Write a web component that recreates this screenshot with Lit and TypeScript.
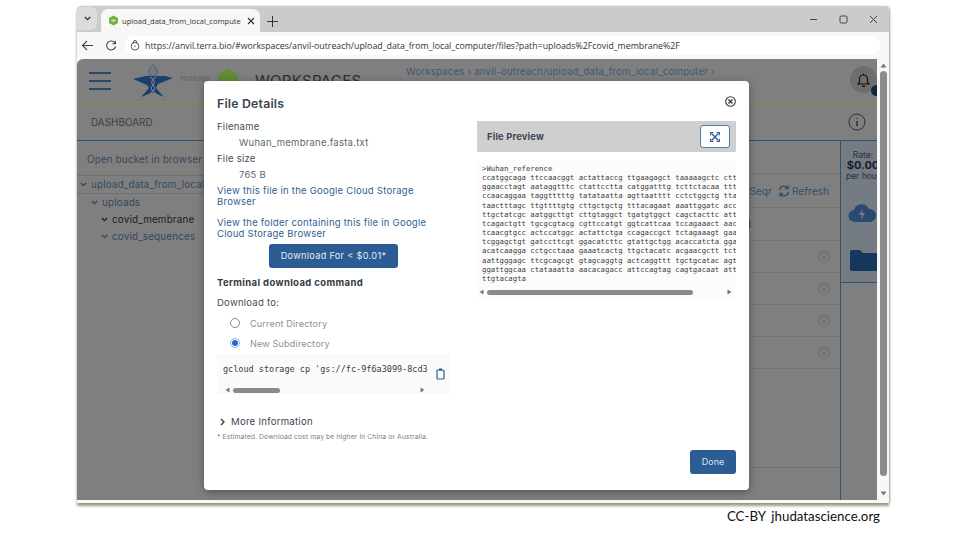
import { LitElement, html, css, svg } from "lit";
import { customElement } from "lit/decorators.js";

const FASTA = `>Wuhan_reference
ccatggcaga ttccaacggt actattaccg ttgaagagct taaaaagctc cttgaac
ggaacctagt aataggtttc ctattcctta catggatttg tcttctacaa tttgaag
ccaacaggaa taggtttttg tatataatta agttaatttt cctctggctg ttatggc
taactttagc ttgttttgtg cttgctgctg tttacagaat aaattggatc accggtg
ttgctatcgc aatggcttgt cttgtaggct tgatgtggct cagctacttc attgctt
tcagactgtt tgcgcgtacg cgttccatgt ggtcattcaa tccagaaact aacattc
tcaacgtgcc actccatggc actattctga ccagaccgct tctagaaagt gaactcg
tcggagctgt gatccttcgt ggacatcttc gtattgctgg acaccatcta ggacgct
acatcaagga cctgcctaaa gaaatcactg ttgctacatc acgaacgctt tcttatt
aattgggagc ttcgcagcgt gtagcaggtg actcaggttt tgctgcatac agtcgct
ggattggcaa ctataaatta aacacagacc attccagtag cagtgacaat attgctt
ttgtacagta`;

const info = (s: number) => html`<svg width=${s} height=${s} viewBox="0 0 18 18" fill="none" stroke="currentColor" stroke-width="1"><circle cx="9" cy="9" r="8"/><path d="M9 5v.8M9 8v5" stroke-width="1.6"/></svg>`;
const chev = () => html`<svg class="chev" width="7" height="5" viewBox="0 0 7 5" fill="none" stroke="currentColor" stroke-width="1.3"><path d="M.8 1l2.7 2.7L6.2 1"/></svg>`;
const tri = (d: string) => svg`<path d=${d} fill="#777"/>`;

@customElement("app-root")
export class AppRoot extends LitElement {
  static styles = css`
    :host { display: block; width: 960px; height: 540px; background: #fff; overflow: hidden; font-family: Inter, "Noto Sans", sans-serif; }
    .slide { display: flex; flex-direction: column; padding: 6px 71px 0 77px; }
    .win { width: 812px; height: 497px; background: #f4f4f4; border-radius: 4px 4px 0 0; box-shadow: 0 3px 3px rgba(90,90,60,.6), 1px 0 2px rgba(70,70,50,.3); display: flex; flex-direction: column; overflow: hidden; }
    .chev { flex: none; }
    .tabs { height: 26px; background: #cbcbcb; display: flex; align-items: flex-end; flex: none; }
    .tabdrop { width: 20px; height: 23px; margin-bottom: 2px; background: #dcdcdc; border-radius: 0 6px 6px 0; display: flex; align-items: center; justify-content: center; color: #333; }
    .tab { width: 159px; height: 23px; margin-left: 4px; background: #f7f7f7; border-radius: 7px 7px 0 0; display: flex; align-items: center; padding: 0 7px; box-sizing: border-box; gap: 3px; }
    .tab > svg { flex: none; }
    .tabtitle { font: 7.6px "Open Sans", sans-serif; color: #333; width: 119px; flex: none; overflow: hidden; white-space: nowrap; }
    .tabx { margin-left: 3px; color: #333; display: flex; }
    .plus { margin: 0 0 5px 7px; color: #333; display: flex; }
    .spacer { flex: 1; }
    .winctl { display: flex; align-items: center; gap: 21px; height: 26px; padding-right: 11px; align-self: flex-start; color: #444; }
    .winctl svg { display: block; }
    .bar { height: 27px; flex: none; background: #f8f8f8; display: flex; align-items: center; padding: 0 9px 0 4px; box-sizing: border-box; gap: 11px; color: #444; }
    .pill { flex: 1; height: 19px; background: #fff; border-radius: 10px; display: flex; align-items: center; padding-left: 5px; gap: 5px; margin-left: -3px; }
    .url { font: 8.8px "Open Sans", sans-serif; color: #333; white-space: nowrap; }
    .body { flex: 1; display: flex; min-height: 0; position: relative; background: #f8f8f8; }
    .page { flex: 1; background: #7f7f7f; display: flex; flex-direction: column; border-radius: 6px 0 0 0; overflow: hidden; color: #34485e; margin-bottom: 3px; }
    .scroll { width: 12px; flex: none; display: flex; flex-direction: column; align-items: center; padding: 4px 0 7px; box-sizing: border-box; justify-content: space-between; }
    .thumb { width: 7px; flex: 1; margin: 3px 0 15px 1px; background: #8c8c8c; border-radius: 4px; }
    .head { height: 43px; flex: none; border-bottom: 1.5px solid #8a8a50; display: flex; align-items: center; padding-left: 12px; position: relative; }
    .burger { width: 22px; display: flex; flex-direction: column; gap: 6px; margin-right: 22px; }
    .burger i { display: block; height: 2px; background: #29486b; }
    .powered { font-size: 6px; margin: -4px 0 0 7px; width: 33px; color: #555e66; white-space: nowrap; }
    .hex { margin-left: 4px; flex: none; }
    .wstitle { margin: 14px 0 0 16px; align-self: flex-start; font-size: 15px; line-height: 15px; letter-spacing: .3px; color: #26303b; white-space: nowrap; }
    .crumb { position: absolute; left: 329px; top: 7px; font-size: 9.6px; letter-spacing: .22px; color: #3f5870; white-space: nowrap; }
    .bell { position: absolute; right: 0; top: 7px; width: 27px; height: 27px; border-radius: 50%; background: #6e6e6e; display: flex; align-items: center; justify-content: center; color: #111; }
    .badge { position: absolute; right: -5px; bottom: -3px; width: 11px; height: 11px; border-radius: 50%; background: #10293f; }
    .dash { height: 38px; flex: none; border-bottom: 1.5px solid #2f5270; display: flex; align-items: center; justify-content: space-between; padding: 1px 11px 0 14px; font-size: 9.8px; letter-spacing: .1px; color: #3a3f44; box-sizing: border-box; }
    .dash svg { color: #333; }
    .main { flex: 1; display: flex; min-height: 0; }
    .tree { width: 127px; flex: none; font-size: 9.8px; letter-spacing: .2px; white-space: nowrap; overflow: hidden; }
    .bucket { height: 35px; display: flex; align-items: center; padding: 2px 0 0 10px; border-bottom: 1px solid #6f6f6f; box-sizing: border-box; }
    .node { display: flex; align-items: center; gap: 4px; height: 17px; }
    .n0 { padding-left: 3px; border-bottom: 1px solid #6f6f6f; }
    .n1 { padding-left: 14px; }
    .n2 { padding-left: 24px; }
    .cur { color: #1c1c1c; }
    .table { flex: 1; display: flex; flex-direction: column; min-width: 0; }
    .row { height: 31px; border-bottom: 1px solid #737373; flex: none; display: flex; align-items: center; justify-content: flex-end; padding-right: 10px; font-size: 10.2px; color: #34506c; gap: 3px; white-space: nowrap; }
    .row.top { height: 32px; }
    .row.act { height: 33px; padding-right: 11px; gap: 6px; }
    .row.cols2 { height: 32px; padding-right: 89px; color: #3a3f44; }
    .row.tall { height: 98px; }
    .refresh { display: flex; align-items: center; gap: 2px; }
    .row svg { color: #5b5b5b; }
    .row.act svg { color: #2f5270; }
    .sidewrap { width: 36px; flex: none; border-left: 1px solid #2f5270; overflow: hidden; }
    .side { height: 132px; border-bottom: 1.5px solid #2f5270; background: #747b83; display: flex; flex-direction: column; align-items: center; width: 44px; padding-top: 9px; box-sizing: content-box; white-space: nowrap; font-size: 8.5px; color: #2a2f35; }
    .side b { font-size: 11px; color: #14202c; line-height: 11px; }
    .side .cloud { margin: 22px 0 0 -3px; flex: none; }
    .side .folder { margin: 27px 0 0 4px; flex: none; }
    .modal { position: absolute; left: 127px; top: 22px; width: 545px; height: 409px; background: #fff; border-radius: 4px; box-shadow: 0 2px 8px rgba(0,0,0,.35); padding: 13px 13px 16px; box-sizing: border-box; display: flex; flex-direction: column; color: #444c55; }
    .mhead { display: flex; justify-content: space-between; align-items: center; height: 18px; }
    .mhead h1 { margin: 0; font-size: 12.3px; font-weight: 600; color: #3a4452; letter-spacing: .2px; }
    .mhead svg { margin-top: -4px; color: #33383e; }
    .cols { display: flex; margin-top: 7px; flex: 1; min-height: 0; gap: 27px; }
    .left { width: 233px; flex: none; font-size: 9.5px; letter-spacing: .25px; }
    .right { flex: 1; min-width: 0; }
    .lab { line-height: 16px; height: 16px; }
    .val { line-height: 16px; height: 16px; padding-left: 22px; color: #5d6670; }
    a { color: #2f6091; text-decoration: none; display: block; line-height: 11px; }
    .l1 { margin-top: 2px; width: 220px; }
    .l2 { margin-top: 10px; width: 225px; }
    .dl { display: block; margin: 5px 0 0 52px; width: 129px; height: 24px; line-height: 24px; text-align: center; border-radius: 3px; background: #2c5c94; color: #e4ebf3; font-size: 9.2px; letter-spacing: .3px; }
    .term { margin-top: 8px; font-weight: 700; line-height: 14px; color: #333b44; letter-spacing: .37px; }
    .to { margin-top: 6px; line-height: 14px; }
    .radio { display: flex; align-items: center; gap: 10px; padding-left: 13px; height: 20px; color: #8b9096; font-size: 9.1px; letter-spacing: .15px; }
    .radio i { width: 8px; height: 8px; border-radius: 50%; border: 1px solid #888; flex: none; display: flex; align-items: center; justify-content: center; }
    .radio.first { margin-top: 3px; }
    .radio i.on { border-color: #8fb2e0; }
    .radio i.on::after { content: ""; width: 6px; height: 6px; border-radius: 50%; background: #2e66c9; }
    .codebox { margin-top: 1px; width: 233px; height: 40px; background: #fafafa; position: relative; padding: 10px 6px 0; box-sizing: border-box; letter-spacing: 0; }
    .codeclip { width: 204px; overflow: hidden; font: 8.5px/10px "DejaVu Sans Mono", monospace; color: #3d3d3d; white-space: pre; }
    .copy { position: absolute; left: 219px; top: 14px; color: #2f5f93; display: block; }
    .hs { display: flex; align-items: center; margin-top: 13px; padding: 0 4px 0 2px; height: 6px; }
    .hs.short { width: 206px; box-sizing: border-box; }
    .hs .track { flex: 1; margin: 0 4px 0 3px; }
    .hs .track i { display: block; height: 5px; border-radius: 3px; background: #8a8a8a; }
    .more { display: flex; align-items: center; gap: 6px; margin-top: 21px; padding-left: 3px; font-size: 9.6px; line-height: 14px; color: #3a4452; }
    .note { margin-top: 3px; font-size: 6.8px; line-height: 9px; color: #7c8086; letter-spacing: .1px; white-space: nowrap; }
    .phead { height: 31px; margin-top: 2px; background: #cfcfcf; display: flex; align-items: center; justify-content: space-between; padding: 0 6px 0 10px; font-size: 9.3px; font-weight: 700; color: #3d4654; letter-spacing: .2px; }
    .expand { width: 30px; height: 23px; background: #fff; border: 1px solid #4f7cb0; border-radius: 3px; box-sizing: border-box; display: flex; align-items: center; justify-content: center; color: #2f5f93; }
    .pbody { margin-top: 8px; background: #fcfcfc; height: 140px; padding: 4px 0 0 5px; box-sizing: border-box; overflow: hidden; }
    .pre { height: 120px; overflow: hidden; margin: 0; font: 7.3px/9.15px "DejaVu Sans Mono", monospace; color: #3e3e3e; white-space: pre; }
    .pbody .hs { margin: 5px 0 0 -5px; }
    .foot { display: flex; justify-content: flex-end; }
    .done { width: 46px; height: 24px; line-height: 24px; text-align: center; border-radius: 3px; background: #2c5c94; color: #dbe4ee; font-size: 9px; }
    .cap { align-self: flex-end; margin: 5px 9px 0 0; font: 13.3px/17px Lato, sans-serif; color: #111; word-spacing: 2.5px; white-space: nowrap; }
  `;

  render() {
    return html`<div class="slide">
      <div class="win">
        <div class="tabs">
          <div class="tabdrop">${chev()}</div>
          <div class="tab">
            <svg width="11" height="11" viewBox="0 0 11 11"><path d="M5.500 .5l4.500 2.500v5l-4.500 2.500L1 8V3z" fill="#6fb43c"/><ellipse cx="5.500" cy="5.500" rx="2.400" ry="1.100" fill="#cfe8b4"/></svg>
            <span class="tabtitle">upload_data_from_local_computer</span>
            <span class="tabx"><svg width="8" height="8" viewBox="0 0 8 8" stroke="currentColor" stroke-width="1.100"><path d="M1 1l6 6M7 1L1 7"/></svg></span>
          </div>
          <span class="plus"><svg width="11" height="11" viewBox="0 0 11 11" stroke="currentColor" stroke-width="1"><path d="M5.500 0v11M0 5.500h11"/></svg></span>
          <span class="spacer"></span>
          <div class="winctl">
            <svg width="9" height="9" viewBox="0 0 9 9" stroke="currentColor"><path d="M1 4.500h7"/></svg>
            <svg width="9" height="9" viewBox="0 0 9 9" stroke="currentColor" fill="none"><rect x="1" y="1" width="7" height="7" rx="1.300"/></svg>
            <svg width="9" height="9" viewBox="0 0 9 9" stroke="currentColor"><path d="M1 1l7 7M8 1L1 8"/></svg>
          </div>
        </div>
        <div class="bar">
          <svg width="13" height="11" viewBox="0 0 13 11" fill="none" stroke="currentColor" stroke-width="1.100"><path d="M12 5.500H1.500M6 1L1.500 5.500 6 10"/></svg>
          <svg width="12" height="12" viewBox="0 0 12 12" fill="none" stroke="currentColor" stroke-width="1.100"><path d="M10 3.200A4.500 4.500 0 1 0 10.500 6.500M10.400 .8v3h-3"/></svg>
          <div class="pill">
            <svg width="10" height="11" viewBox="0 0 10 11" fill="none" stroke="#444" stroke-width=".9"><circle cx="5" cy="6.300" r="3.800"/><path d="M3.400 3V2a1.600 1.600 0 0 1 3.200 0v1M5 5.500v1.600"/></svg>
            <span class="url">https://anvil.terra.bio/#workspaces/anvil-outreach/upload_data_from_local_computer/files?path=uploads%2Fcovid_membrane%2F</span>
          </div>
        </div>
        <div class="body">
          <div class="page">
            <div class="head">
              <div class="burger"><i></i><i></i><i></i></div>
              <svg width="40" height="34" viewBox="0 0 40 34" style="flex:none">
                <path d="M0 15L12 12H32L40 14 25 20 23 24 31 33 22 29H18L8 33 16 24 14 21z" fill="#1d3f6e"/>
                <path d="M20 1C15 5 15 9 17 12H23C25 9 25 5 20 1z" fill="#6f7a84" stroke="#47566a" stroke-width=".8"/>
                <path d="M17 13c5 3 5 6 3 8s-3 5 3 9M23 13c-5 3-5 6-3 8s3 5-3 9" fill="none" stroke="#8a949c" stroke-width="1"/>
              </svg>
              <span class="powered">POWERED</span>
              <svg class="hex" width="22" height="26" viewBox="0 0 22 26"><path d="M11 1l10 6v12l-10 6L1 19V7z" fill="#5e8f33"/></svg>
              <span class="wstitle">WORKSPACES</span>
              <span class="crumb">Workspaces › anvil-outreach/upload_data_from_local_computer ›</span>
              <div class="bell">
                <svg width="15" height="16" viewBox="0 0 15 16" fill="none" stroke="currentColor" stroke-width="1.200"><path d="M2 12h11l-1.500-2V7a4 4 0 0 0-8 0v3zM6 14.300h3M7.500 3V1.500"/></svg>
                <i class="badge"></i>
              </div>
            </div>
            <div class="dash"><span>DASHBOARD</span>${info(18)}</div>
            <div class="main">
              <div class="tree">
                <div class="bucket">Open bucket in browser</div>
                <div class="node n0">${chev()}<span>upload_data_from_local_computer</span></div>
                <div class="node n1">${chev()}<span>uploads</span></div>
                <div class="node n2 cur">${chev()}<span>covid_membrane</span></div>
                <div class="node n2">${chev()}<span>covid_sequences</span></div>
              </div>
              <div class="table">
                <div class="row top"></div>
                <div class="row act"><span>Seqr</span>
                  <span class="refresh"><svg width="12" height="12" viewBox="0 0 12 12" fill="none" stroke="currentColor" stroke-width="1.500"><path d="M1.500 5A4.600 4.600 0 0 1 9.500 2.800M10.500 7A4.600 4.600 0 0 1 2.500 9.200M10 .5v3H7M2 11.500V8.500h3"/></svg>Refresh</span></div>
                <div class="row cols2">Last modified</div>
                ${[0, 1, 2, 3].map(() => html`<div class="row">${info(12)}</div>`)}
                <div class="row tall"></div>
              </div>
              <div class="sidewrap">
                <div class="side">
                  <span>Rate:</span><b>$0.00</b><span>per hour</span>
                  <svg class="cloud" width="28" height="20" viewBox="0 0 28 20"><path d="M7 19a6 6 0 0 1-1-12 8 8 0 0 1 15-1 6.500 6.500 0 0 1 1 13z" fill="#2a4a72"/><path d="M15 5l-4 7h3l-1 5 4-7h-3z" fill="#747b83"/></svg>
                  <svg class="folder" width="30" height="21" viewBox="0 0 30 21"><path d="M0 2a2 2 0 0 1 2-2h8l3 3h17v18H2a2 2 0 0 1-2-2z" fill="#16375c"/></svg>
                </div>
              </div>
            </div>
          </div>
          <div class="scroll">
            <svg width="7" height="5" viewBox="0 0 7 5">${tri("M3.500 .5L6.500 4.500H.5z")}</svg>
            <div class="thumb"></div>
            <svg width="7" height="5" viewBox="0 0 7 5">${tri("M3.500 4.500L.5 .5H6.500z")}</svg>
          </div>
          <div class="modal">
            <div class="mhead">
              <h1>File Details</h1>
              <svg width="11" height="11" viewBox="0 0 11 11" fill="none" stroke="currentColor" stroke-width="1.100"><circle cx="5.500" cy="5.500" r="4.800"/><path d="M3.500 3.500l4 4M7.500 3.500l-4 4" stroke-width="1.400"/></svg>
            </div>
            <div class="cols">
              <div class="left">
                <div class="lab">Filename</div>
                <div class="val">Wuhan_membrane.fasta.txt</div>
                <div class="lab">File size</div>
                <div class="val">765 B</div>
                <a class="l1">View this file in the Google Cloud Storage Browser</a>
                <a class="l2">View the folder containing this file in Google Cloud Storage Browser</a>
                <span class="dl">Download For &lt; $0.01*</span>
                <div class="term">Terminal download command</div>
                <div class="to">Download to:</div>
                <div class="radio first"><i></i>Current Directory</div>
                <div class="radio"><i class="on"></i>New Subdirectory</div>
                <div class="codebox">
                  <div class="codeclip">gcloud storage cp 'gs://fc-9f6a3099-8cd3-4a5e</div>
                  <svg class="copy" width="9" height="12" viewBox="0 0 9 12" fill="none" stroke="currentColor" stroke-width="1.200"><rect x="1" y="2" width="7" height="9" rx="1"/><path d="M3 1.500h3" stroke-width="2"/></svg>
                  <div class="hs short">
                    <svg width="5" height="6" viewBox="0 0 5 6">${tri("M.5 3L4.500 .5V5.500z")}</svg>
                    <div class="track"><i style="width:47px"></i></div>
                    <svg width="5" height="6" viewBox="0 0 5 6">${tri("M4.500 3L.5 .5V5.500z")}</svg>
                  </div>
                </div>
                <div class="more"><svg width="5" height="8" viewBox="0 0 5 8" fill="none" stroke="#333" stroke-width="1.300"><path d="M1 1l3 3-3 3"/></svg><span>More Information</span></div>
                <div class="note">* Estimated. Download cost may be higher in China or Australia.</div>
              </div>
              <div class="right">
                <div class="phead"><span>File Preview</span>
                  <span class="expand"><svg width="10" height="10" viewBox="0 0 11 11" fill="none" stroke="currentColor" stroke-width="1.500"><path d="M2 2l7 7M9 2l-7 7"/><path d="M.7 3.700V.7h3M7.300 .7h3v3M10.300 7.300v3h-3M3.700 10.300h-3v-3" stroke-width="1.300"/></svg></span>
                </div>
                <div class="pbody">
                  <pre class="pre">${FASTA}</pre>
                  <div class="hs">
                    <svg width="5" height="6" viewBox="0 0 5 6">${tri("M.5 3L4.500 .5V5.500z")}</svg>
                    <div class="track"><i style="width:206px"></i></div>
                    <svg width="5" height="6" viewBox="0 0 5 6">${tri("M4.500 3L.5 .5V5.500z")}</svg>
                  </div>
                </div>
              </div>
            </div>
            <div class="foot"><span class="done">Done</span></div>
          </div>
        </div>
      </div>
      <div class="cap">CC-BY jhudatascience.org</div>
    </div>`;
  }
}
